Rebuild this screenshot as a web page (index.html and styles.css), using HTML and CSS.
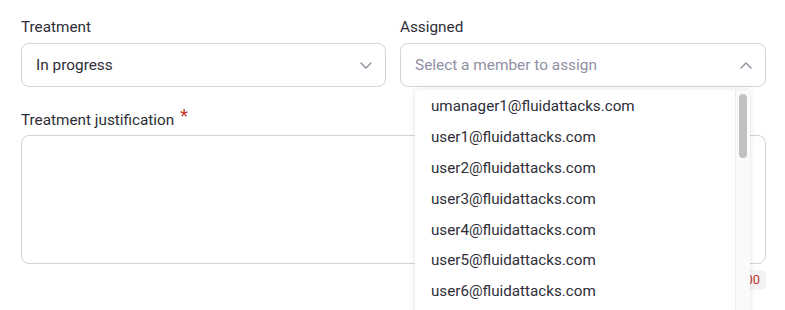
FILE: index.html
```html
<!DOCTYPE html>
<html lang="en">
<head>
<meta charset="utf-8">
<link rel="stylesheet" href="styles.css">
</head>
<body>
<div class="form">
  <div class="row">
    <div class="field">
      <div class="label">Treatment</div>
      <div class="select">
        <span class="value">In progress</span>
        <svg class="chev" width="12" height="7" viewBox="0 0 12 7"><path d="M1 1l5 5 5-5" fill="none" stroke="#8a8a9a" stroke-width="1.3" stroke-linecap="round" stroke-linejoin="round"/></svg>
      </div>
    </div>
    <div class="field assigned">
      <div class="label">Assigned</div>
      <div class="select">
        <span class="placeholder">Select a member to assign</span>
        <svg class="chev" width="12" height="7" viewBox="0 0 12 7"><path d="M1 6l5-5 5 5" fill="none" stroke="#8a8a9a" stroke-width="1.3" stroke-linecap="round" stroke-linejoin="round"/></svg>
      </div>
      <div class="menu">
        <ul class="options">
          <li>umanager1@fluidattacks.com</li>
          <li>user1@fluidattacks.com</li>
          <li>user2@fluidattacks.com</li>
          <li>user3@fluidattacks.com</li>
          <li>user4@fluidattacks.com</li>
          <li>user5@fluidattacks.com</li>
          <li>user6@fluidattacks.com</li>
        </ul>
        <div class="track"><div class="thumb"></div></div>
      </div>
    </div>
  </div>
  <div class="field just">
    <div class="label">Treatment justification<span class="req">*</span></div>
    <div class="textarea"></div>
    <div class="counter-row"><span class="counter">0/1000</span></div>
  </div>
</div>
</body>
</html>
```
FILE: styles.css
```css
* { box-sizing: border-box; }
html, body { margin: 0; padding: 0; background: #fff; }
body {
  font-family: Roboto, "Liberation Sans", sans-serif;
  color: #2e2e38;
  width: 785px;
  height: 310px;
  overflow: hidden;
}
.form {
  padding: 17px 19px 0 21px;
}
.row {
  display: grid;
  grid-template-columns: 365px 366px;
  column-gap: 14px;
  position: relative;
  z-index: 2;
}
.field { position: relative; }
.label {
  font-size: 15.3px;
  line-height: 20px;
  margin-bottom: 6px;
  color: #2e2e38;
}
.req {
  color: #c0392b;
  font-size: 18px;
  line-height: 10px;
  margin-left: 6px;
  position: relative;
  top: -3px;
}
.select {
  height: 44px;
  border: 1px solid #d2d2da;
  border-radius: 8px;
  display: flex;
  align-items: center;
  justify-content: space-between;
  padding: 0 13px 0 14px;
  font-size: 15.4px;
}
.placeholder { color: #8f8fa3; }
.value { color: #2e2e38; }
.just { margin-top: 23px; z-index: 1; }
.just .label { margin-bottom: 5px; }
.textarea {
  height: 129px;
  border: 1px solid #d2d2da;
  border-radius: 8px;
}
.counter-row {
  display: flex;
  justify-content: flex-end;
  margin-top: 6px;
}
.counter {
  background: #f4f4f6;
  color: #c0392b;
  font-size: 13px;
  line-height: 20px;
  padding: 0 6px;
  border-radius: 4px;
}
.menu {
  position: absolute;
  left: 15px;
  top: 73px;
  width: 335px;
  height: 226px;
  background: #fff;
  box-shadow: 0 0 6px rgba(0,0,0,0.12);
  border-radius: 2px;
  overflow: hidden;
}
.options {
  list-style: none;
  margin: 0;
  padding: 1px 0 0 0;
}
.options li {
  height: 30.9px;
  line-height: 30.9px;
  padding-left: 16px;
  font-size: 15.2px;
  color: #2e2e38;
}
.track {
  position: absolute;
  top: 0;
  right: 0;
  width: 15px;
  height: 100%;
  background: #fafafa;
  border-left: 1px solid #ececec;
}
.thumb {
  position: absolute;
  left: 3px;
  top: 4px;
  width: 8px;
  height: 64px;
  border-radius: 4px;
  background: #c1c1c1;
}
```
